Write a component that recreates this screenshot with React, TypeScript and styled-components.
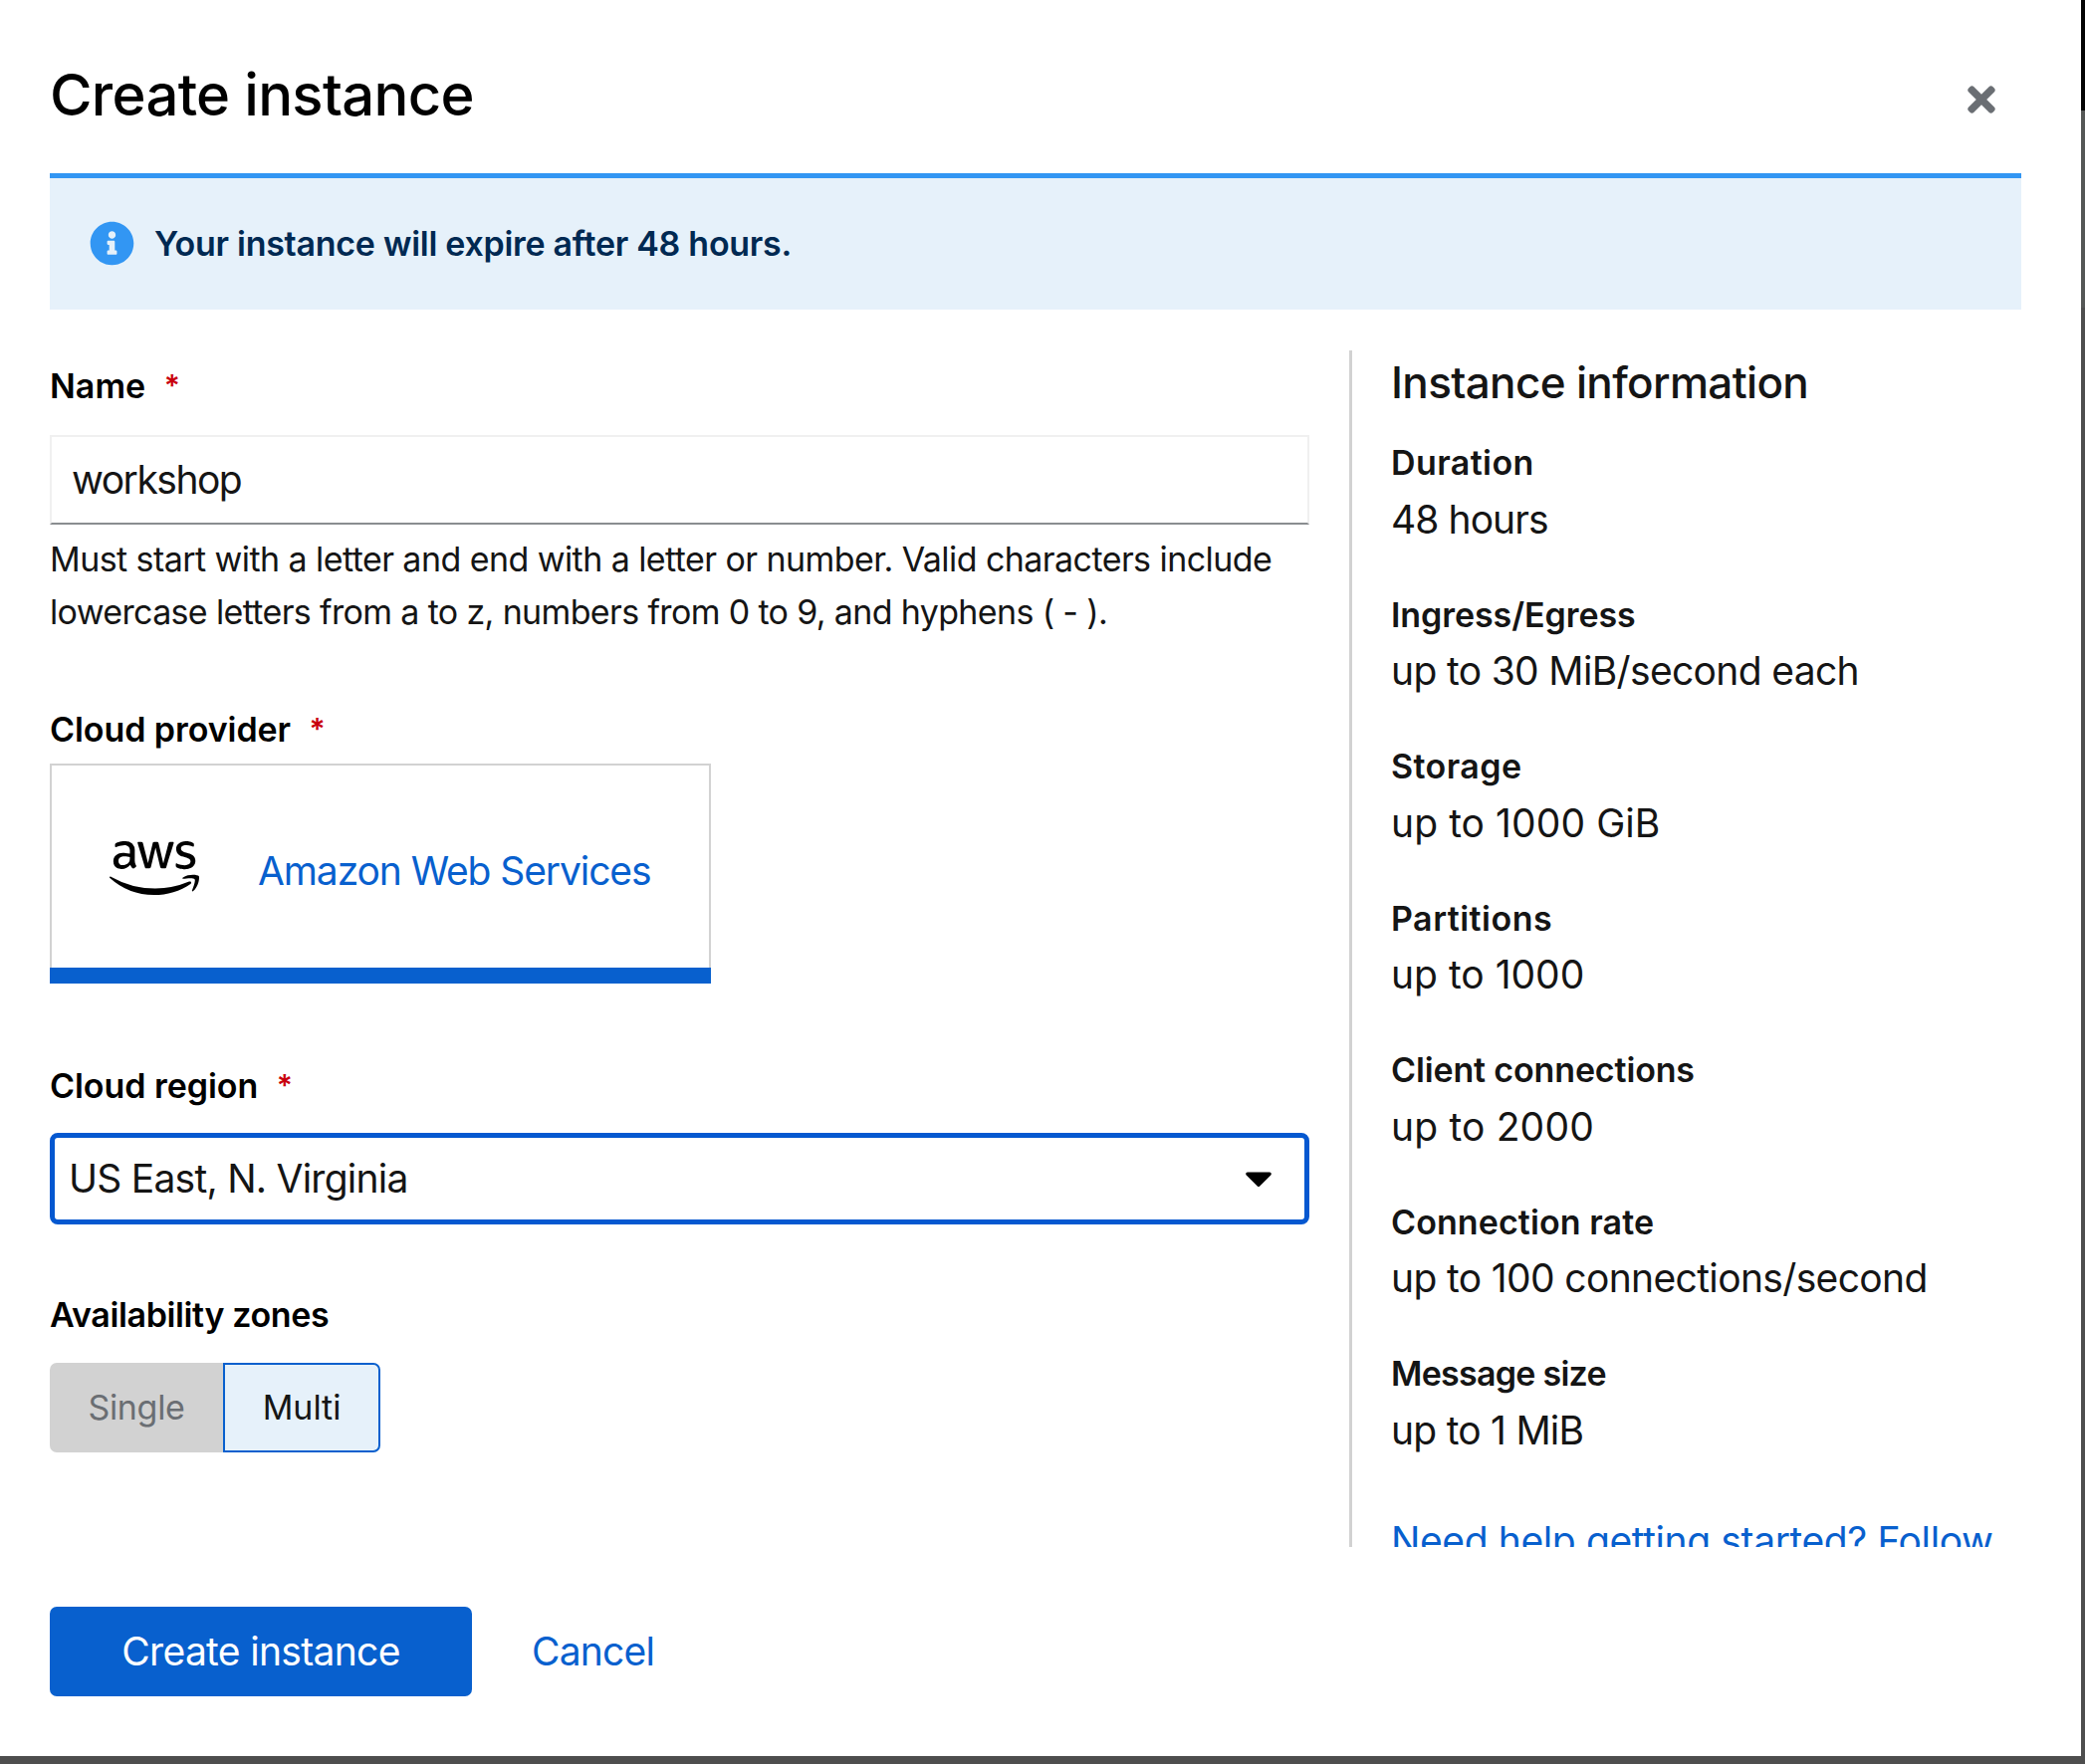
import React from 'react';
import styled, { createGlobalStyle } from 'styled-components';
import { FaAws, FaCaretDown, FaInfoCircle, FaTimes } from 'react-icons/fa';

const colors = {
  primary: '#0860ce',
  focus: '#0558d0',
  info: '#3296f3',
  infoBg: '#e6f1fa',
  infoText: '#002952',
  text: '#151515',
  muted: '#6a6e73',
  border: '#d2d2d2',
  danger: '#c9000d',
};

const GlobalStyle = createGlobalStyle`
  *, *::before, *::after { box-sizing: border-box; }
  body {
    margin: 0;
    background: #fff;
    color: ${colors.text};
    font-family: Inter, "Liberation Sans", sans-serif;
    font-size: 39px;
    overflow: hidden;
  }
`;

const Backdrop = styled.div`
  width: 2094px;
  height: 1772px;
  overflow: hidden;
  background: linear-gradient(#030303 0 111px, #555756 111px 309px, #4e4e4e 309px);
`;

const Modal = styled.section`
  display: flex;
  flex-direction: column;
  width: 2090px;
  height: 1764px;
  padding: 0 60px 0 50px;
  background: #fff;
`;

const Header = styled.header`
  display: flex;
  justify-content: space-between;
  align-items: flex-start;
  flex: none;
  height: 174px;
  padding: 56px 20px 0 0;
`;

const Title = styled.h1`
  margin: 0;
  color: #000;
  font-size: 58px;
  font-weight: 500;
  line-height: 78px;
  letter-spacing: -0.7px;
`;

const CloseButton = styled.button`
  display: flex;
  margin-top: 24px;
  padding: 0;
  border: 0;
  background: none;
  color: ${colors.muted};
  font-size: 40px;
`;

const Alert = styled.div`
  display: flex;
  align-items: center;
  gap: 20px;
  flex: none;
  width: 1980px;
  height: 137px;
  padding: 0 0 2px 40px;
  border-top: 5px solid ${colors.info};
  background: ${colors.infoBg};
  color: ${colors.info};
  font-size: 45px;
`;

const AlertTitle = styled.strong`
  color: ${colors.infoText};
  font-size: 34px;
  font-weight: 600;
  letter-spacing: -0.28px;
  white-space: nowrap;
`;

const Body = styled.div`
  display: grid;
  grid-template-columns: 1265px 1fr;
  column-gap: 40px;
  flex: none;
  height: 1202px;
  margin-top: 41px;
  overflow: hidden;
`;

const Form = styled.form`
  display: flex;
  flex-direction: column;
  align-items: stretch;
  padding-top: 10px;
`;

const Field = styled.div<{ $before?: number }>`
  display: flex;
  flex-direction: column;
  margin-top: ${(p) => p.$before ?? 0}px;
`;

const Label = styled.label<{ $spacing: number; $after: number }>`
  display: flex;
  height: 52px;
  margin-bottom: ${(p) => p.$after}px;
  color: #000;
  font-size: 34px;
  font-weight: 600;
  line-height: 52px;
  letter-spacing: ${(p) => p.$spacing}px;
`;

const Required = styled.span`
  margin-left: 18.5px;
  color: ${colors.danger};
  font-size: 30px;
  line-height: 50px;
`;

const TextInput = styled.input`
  width: 100%;
  height: 90px;
  padding: 0 20px 1px;
  border: 2px solid #f0f0f0;
  border-bottom-color: #8a8d90;
  outline: 0;
  background: #fff;
  color: ${colors.text};
  font: inherit;
  letter-spacing: -1.5px;
`;

const HelperText = styled.div`
  margin-top: 8px;
  font-size: 34px;
  line-height: 53px;
`;

const HelperLine = styled.div<{ $spacing: number }>`
  letter-spacing: ${(p) => p.$spacing}px;
  white-space: nowrap;
`;

const ProviderTile = styled.div`
  width: 664px;
  border-bottom: 16px solid ${colors.primary};
`;

const ProviderContent = styled.div`
  display: flex;
  align-items: center;
  gap: 59px;
  height: 205px;
  padding-left: 58px;
  border: 2px solid ${colors.border};
  border-bottom: 0;
`;

const AwsLogo = styled(FaAws)`
  flex: none;
  width: 90px;
  height: 72px;
  margin-top: 2px;
  color: #000;
`;

const ProviderName = styled.span`
  padding-top: 8px;
  color: ${colors.primary};
  line-height: 60px;
  letter-spacing: -1.1px;
  white-space: nowrap;
`;

const Select = styled.div`
  display: flex;
  align-items: center;
  justify-content: space-between;
  height: 91.5px;
  padding: 0 24.5px 0 14px;
  border: 5px solid ${colors.focus};
  border-radius: 8px;
  letter-spacing: -0.75px;

  svg {
    margin-top: -2px;
    color: #000;
    font-size: 44px;
  }
`;

const ToggleGroup = styled.div`
  display: flex;
  height: 90px;
  font-size: 34px;
`;

const Toggle = styled.button<{ $selected?: boolean }>`
  width: ${(p) => (p.$selected ? 158 : 174)}px;
  padding: 0 0 1px;
  border: 2px solid ${(p) => (p.$selected ? colors.primary : colors.border)};
  border-radius: ${(p) => (p.$selected ? '0 7px 7px 0' : '7px 0 0 7px')};
  background: ${(p) => (p.$selected ? colors.infoBg : colors.border)};
  color: ${(p) => (p.$selected ? colors.text : colors.muted)};
  font: inherit;
  letter-spacing: ${(p) => (p.$selected ? -0.04 : -0.3)}px;
`;

const Info = styled.aside`
  padding: 3px 0 0 39px;
  border-left: 3px solid ${colors.border};
  white-space: nowrap;
`;

const InfoTitle = styled.h2`
  margin: 0 0 26px;
  font-size: 44px;
  font-weight: 500;
  line-height: 58px;
  letter-spacing: -0.65px;
`;

const InfoList = styled.dl`
  margin: 0;
`;

const InfoItem = styled.div`
  height: 152.5px;
`;

const Term = styled.dt<{ $spacing: number }>`
  font-size: 34px;
  font-weight: 600;
  line-height: 52.5px;
  letter-spacing: ${(p) => p.$spacing}px;
`;

const Value = styled.dd<{ $spacing: number }>`
  margin: 0;
  line-height: 60px;
  letter-spacing: ${(p) => p.$spacing}px;
`;

const HelpLink = styled.a`
  display: block;
  margin-top: 11px;
  color: ${colors.primary};
  line-height: 60px;
  letter-spacing: -0.39px;
`;

const Footer = styled.footer`
  display: flex;
  gap: 60px;
  margin-top: 60px;
`;

const Button = styled.button<{ $primary?: boolean }>`
  width: ${(p) => (p.$primary ? '424px' : 'auto')};
  height: 90px;
  padding: 0 0 1px;
  border: 0;
  border-radius: 7px;
  background: ${(p) => (p.$primary ? colors.primary : 'none')};
  color: ${(p) => (p.$primary ? '#fff' : colors.primary)};
  font: inherit;
  letter-spacing: ${(p) => (p.$primary ? -0.68 : -0.8)}px;
`;

const details = [
  { term: 'Duration', value: '48 hours', ts: 0.4, vs: -0.93 },
  { term: 'Ingress/Egress', value: 'up to 30 MiB/second each', ts: -0.07, vs: -0.66 },
  { term: 'Storage', value: 'up to 1000 GiB', ts: 0.42, vs: 0.08 },
  { term: 'Partitions', value: 'up to 1000', ts: 0.49, vs: 0 },
  { term: 'Client connections', value: 'up to 2000', ts: -0.14, vs: 0.17 },
  { term: 'Connection rate', value: 'up to 100 connections/second', ts: 0.1, vs: -0.64 },
  { term: 'Message size', value: 'up to 1 MiB', ts: -0.73, vs: -0.76 },
];

export default function App() {
  return (
    <Backdrop>
      <GlobalStyle />
      <Modal>
        <Header>
          <Title>Create instance</Title>
          <CloseButton aria-label="Close">
            <FaTimes />
          </CloseButton>
        </Header>
        <Alert>
          <FaInfoCircle />
          <AlertTitle>Your instance will expire after 48 hours.</AlertTitle>
        </Alert>
        <Body>
          <Form>
            <Field>
              <Label $spacing={0.02} $after={23}>
                Name<Required>*</Required>
              </Label>
              <TextInput defaultValue="workshop" />
              <HelperText>
                <HelperLine $spacing={-0.57}>
                  Must start with a letter and end with a letter or number. Valid characters include
                </HelperLine>
                <HelperLine $spacing={-0.65}>
                  lowercase letters from a to z, numbers from 0 to 9, and hyphens ( - ).
                </HelperLine>
              </HelperText>
            </Field>
            <Field $before={66}>
              <Label $spacing={-0.07} $after={8}>
                Cloud provider<Required>*</Required>
              </Label>
              <ProviderTile>
                <ProviderContent>
                  <AwsLogo />
                  <ProviderName>Amazon Web Services</ProviderName>
                </ProviderContent>
              </ProviderTile>
            </Field>
            <Field $before={77}>
              <Label $spacing={-0.04} $after={21}>
                Cloud region<Required>*</Required>
              </Label>
              <Select>
                US East, N. Virginia
                <FaCaretDown />
              </Select>
            </Field>
            <Field $before={65}>
              <Label $spacing={-0.38} $after={22.5}>
                Availability zones
              </Label>
              <ToggleGroup>
                <Toggle type="button">Single</Toggle>
                <Toggle type="button" $selected>
                  Multi
                </Toggle>
              </ToggleGroup>
            </Field>
          </Form>
          <Info>
            <InfoTitle>Instance information</InfoTitle>
            <InfoList>
              {details.map((d) => (
                <InfoItem key={d.term}>
                  <Term $spacing={d.ts}>{d.term}</Term>
                  <Value $spacing={d.vs}>{d.value}</Value>
                </InfoItem>
              ))}
            </InfoList>
            <HelpLink>Need help getting started? Follow</HelpLink>
          </Info>
        </Body>
        <Footer>
          <Button $primary>Create instance</Button>
          <Button>Cancel</Button>
        </Footer>
      </Modal>
    </Backdrop>
  );
}
